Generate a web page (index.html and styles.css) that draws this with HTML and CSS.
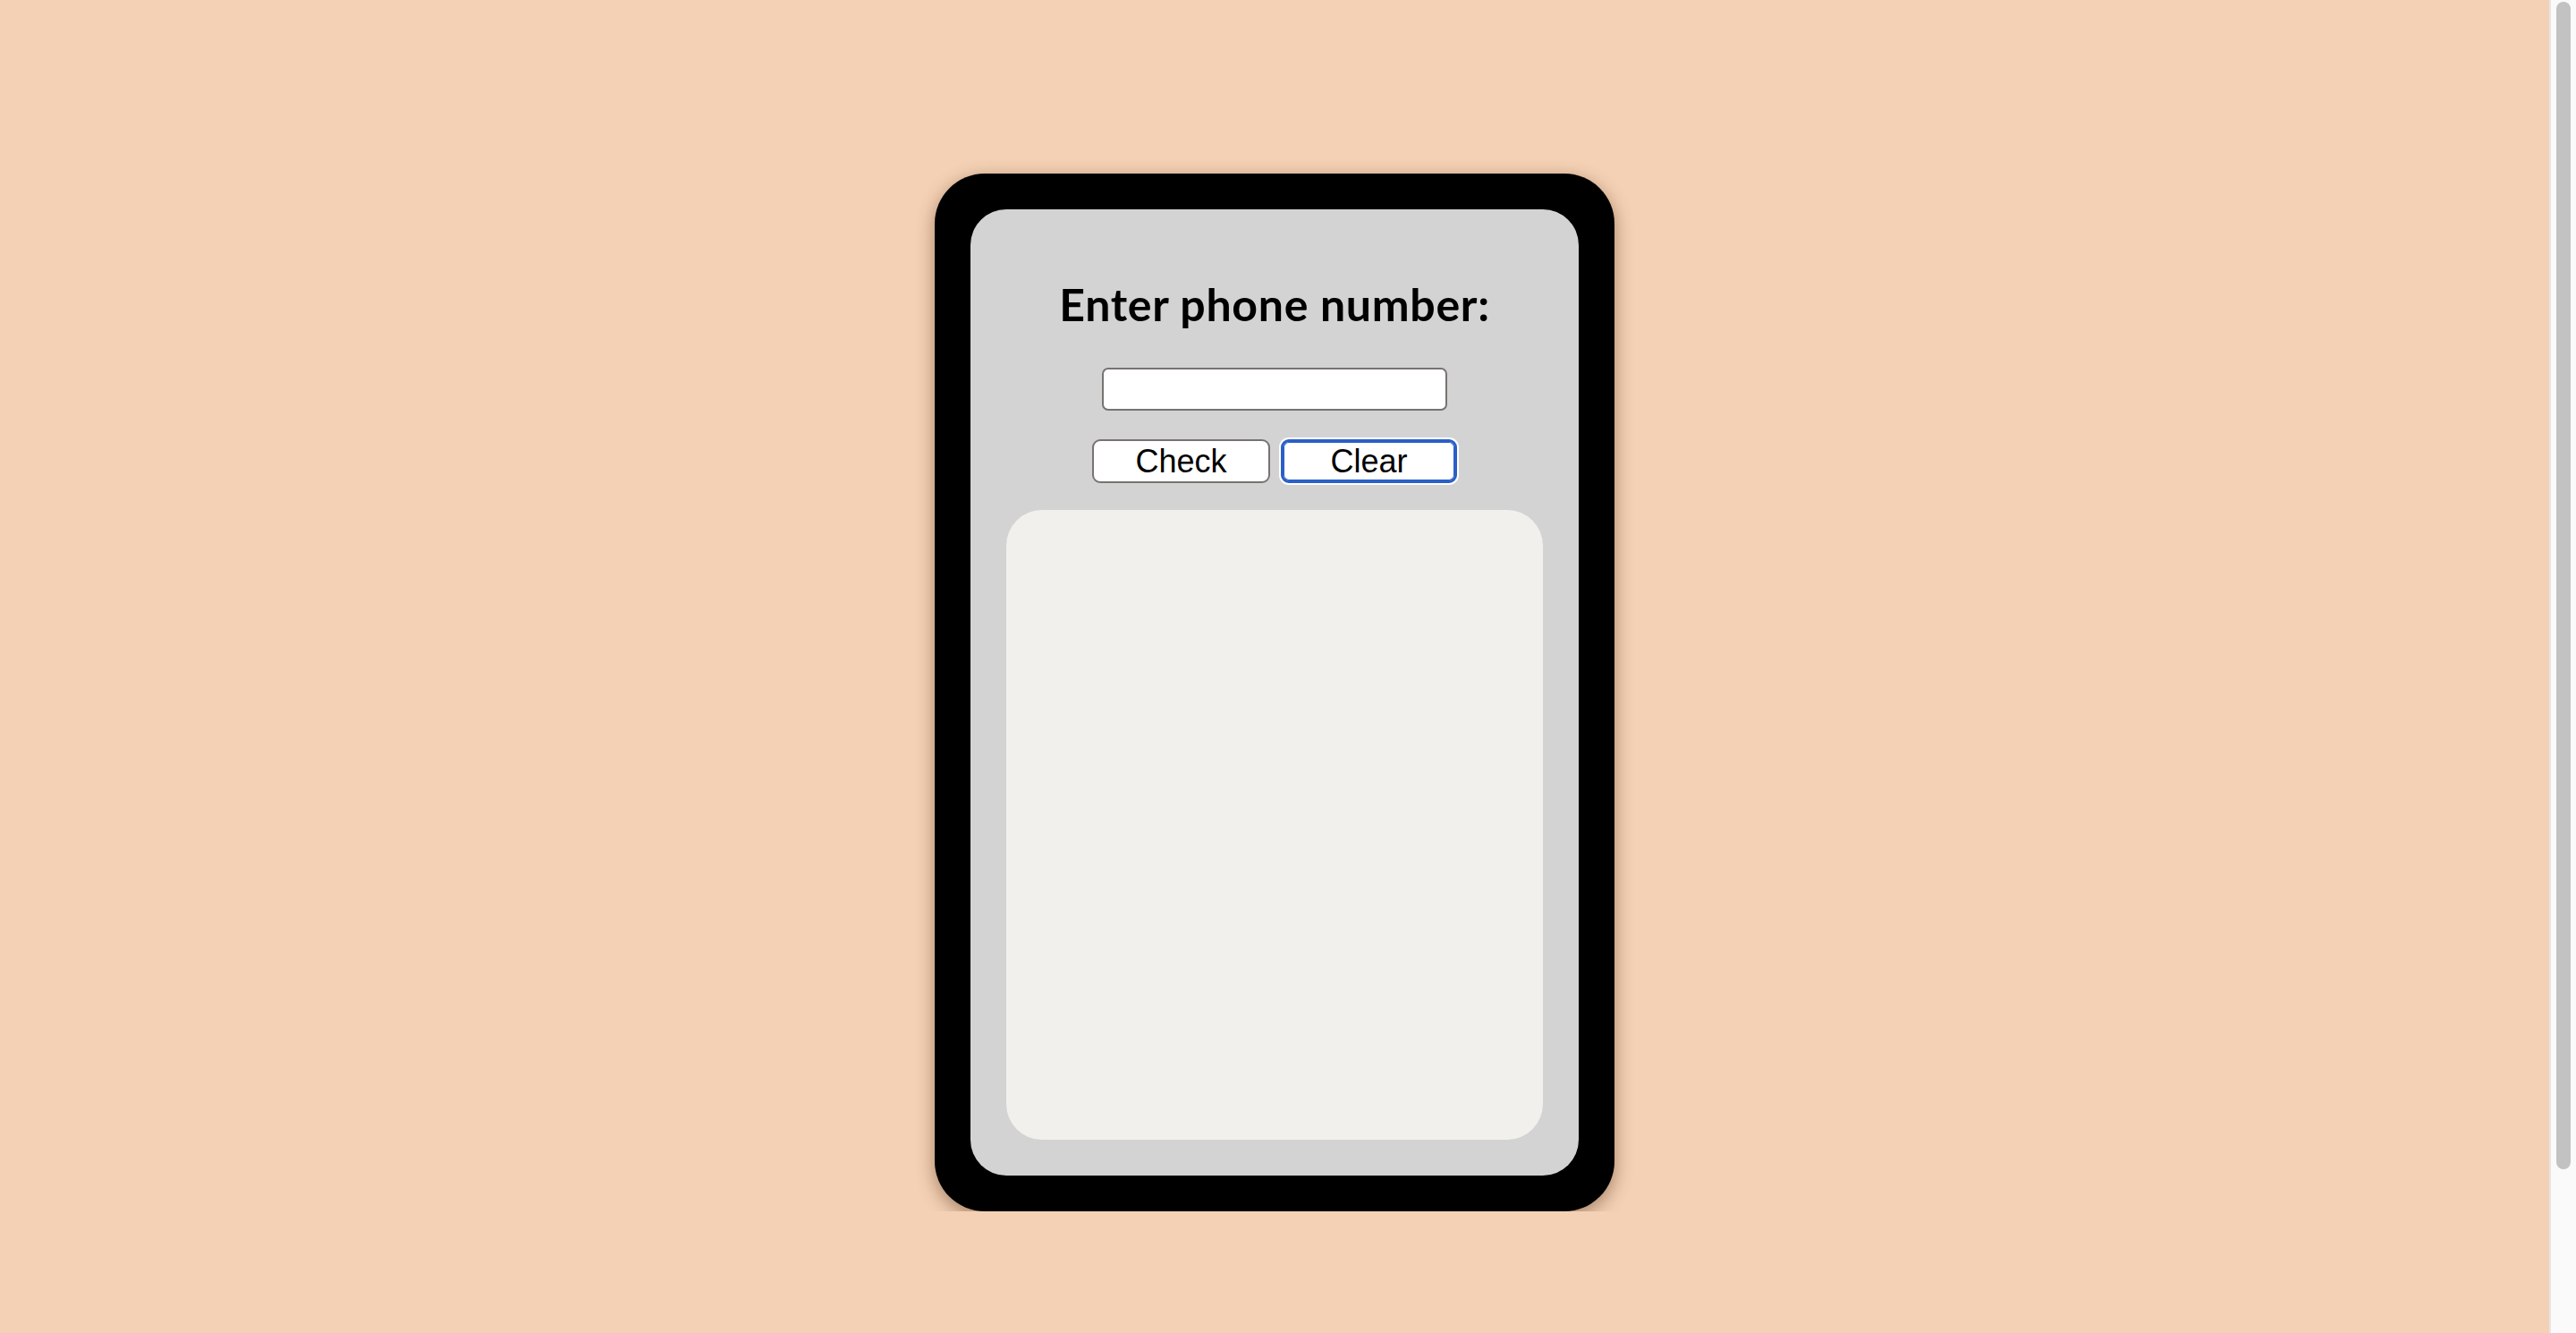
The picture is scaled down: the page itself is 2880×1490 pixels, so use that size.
FILE: index.html
```html
<!DOCTYPE html>
<html lang="en">
<head>
<meta charset="utf-8">
<title>Phone Number Validator</title>
<link rel="stylesheet" href="styles.css">
</head>
<body>
<main class="page">
  <div class="phone">
    <div class="screen">
      <h1 class="title">Enter phone number:</h1>
      <input class="user-input" type="text">
      <div class="actions">
        <button class="btn">Check</button>
        <button class="btn btn-focus">Clear</button>
      </div>
      <div class="results"></div>
    </div>
  </div>
</main>
<div class="scrollbar" aria-hidden="true"><div class="scrollbar-thumb"></div></div>
</body>
</html>
```

FILE: styles.css
```css
html {
  background: #f4d1b4;
}
body {
  margin: 0;
  background: #f4d1b4;
  overflow: hidden;
}
.page {
  display: flex;
  justify-content: center;
  padding: 194px 30px 0 0;
}
.phone {
  width: 760px;
  box-sizing: border-box;
  padding: 40px;
  background: #000;
  border-radius: 56px;
  box-shadow: 0 6px 20px rgba(70, 35, 10, 0.45);
}
.screen {
  height: 1080px;
  box-sizing: border-box;
  padding: 40px;
  background: #d3d3d3;
  border-radius: 40px;
  display: flex;
  flex-direction: column;
  align-items: center;
}
.title {
  margin: 41px 0 0;
  font-family: Lato, "Noto Sans", sans-serif;
  font-weight: 700;
  font-size: 50px;
  line-height: 50px;
  color: #000;
  letter-spacing: 0.7px;
}
.user-input {
  margin-top: 46px;
  width: 386px;
  height: 48px;
  box-sizing: border-box;
  border: 2px solid #777370;
  border-radius: 7px;
  background: #fff;
  font-size: 30px;
  padding: 0 8px;
  outline: none;
}
.actions {
  margin-top: 32px;
  display: flex;
  gap: 12px;
}
.btn {
  width: 199px;
  height: 49px;
  box-sizing: border-box;
  padding: 0;
  border: 2px solid #777370;
  border-radius: 9px;
  background: #fff;
  color: #000;
  font-family: "Liberation Sans", Arial, sans-serif;
  font-size: 36px;
  line-height: 1;
}
.btn-focus {
  width: 197px;
  border: 3px solid #2a5fc6;
  box-shadow: inset 0 0 0 1px #2a5fc6, 0 0 0 2px #fff;
}
.results {
  margin-top: 30px;
  align-self: stretch;
  flex: 1;
  background: #f1f0ec;
  border-radius: 40px;
}
.scrollbar {
  position: fixed;
  top: 0;
  right: 0;
  bottom: 0;
  width: 30px;
  box-sizing: border-box;
  padding: 2px 6px 0 6px;
  background: #fafafa;
  border-left: 2px solid #e6e6e6;
}
.scrollbar-thumb {
  height: 1305px;
  border-radius: 8px;
  background: #c2c2c2;
}
```
